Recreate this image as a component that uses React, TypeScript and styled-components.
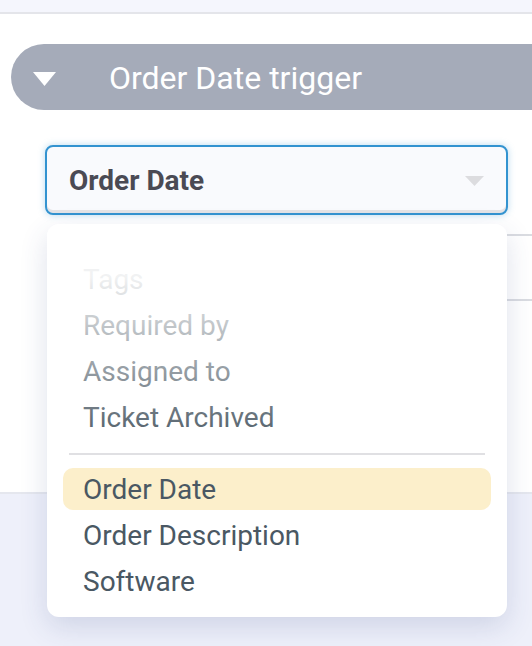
import React from "react";
import styled, { createGlobalStyle } from "styled-components";

const GlobalStyle = createGlobalStyle`
  body {
    margin: 0;
    background: #eef0fa;
    font-family: Roboto, "Liberation Sans", sans-serif;
  }
`;

type Option = { label: string; active?: boolean };

const archived: Option[] = [
  { label: "Tags" },
  { label: "Required by" },
  { label: "Assigned to" },
  { label: "Ticket Archived" },
];

const fields: Option[] = [
  { label: "Order Date", active: true },
  { label: "Order Description" },
  { label: "Software" },
];

const App = () => {
  return (
    <Page>
      <GlobalStyle />
      <TopBand />
      <Panel>
        <Trigger>
          <svg width="23" height="14" viewBox="0 0 23 14">
            <polygon points="0,0 23,0 11.5,14" fill="#ffffff" />
          </svg>
          <TriggerTitle>Order Date trigger</TriggerTitle>
        </Trigger>

        <Field>
          <Select>
            <SelectValue>Order Date</SelectValue>
            <svg width="19" height="10" viewBox="0 0 19 10">
              <polygon points="0,0 19,0 9.5,10" fill="#dcdcdf" />
            </svg>
          </Select>

          <HiddenRow />

          <Menu>
            <Fade />
            <Group>
              {archived.map((o) => (
                <Item key={o.label}>{o.label}</Item>
              ))}
            </Group>
            <Divider />
            <Group>
              {fields.map((o) => (
                <Item key={o.label} $active={o.active}>
                  {o.label}
                </Item>
              ))}
            </Group>
          </Menu>
        </Field>
      </Panel>
    </Page>
  );
};

export default App;

const Page = styled.div`
  width: 532px;
  min-height: 646px;
  overflow: hidden;
`;

const TopBand = styled.div`
  height: 12px;
  background: #f5f6fd;
  border-bottom: 2px solid #e4e5ea;
`;

const Panel = styled.div`
  height: 480px;
  background: #ffffff;
  border-bottom: 2px solid #e5e7ee;
  padding-top: 30px;
  box-sizing: border-box;
`;

const Trigger = styled.div`
  display: flex;
  align-items: center;
  height: 66px;
  margin-left: 11px;
  padding-left: 22px;
  background: #a5abb9;
  border-radius: 33px 0 0 33px;

  & svg {
    flex-shrink: 0;
    margin-top: 3px;
  }
`;

const TriggerTitle = styled.span`
  margin-left: 53px;
  color: #ffffff;
  font-size: 32px;
  line-height: 1;
  margin-top: 2px;
`;

const Field = styled.div`
  position: relative;
  margin: 35px 0 0 45px;
  width: 463px;
`;

const Select = styled.div`
  display: flex;
  align-items: center;
  justify-content: space-between;
  height: 70px;
  box-sizing: border-box;
  padding: 0 22px 0 22px;
  background: #f9fafd;
  border: 2px solid #3393d0;
  border-radius: 8px;
  box-shadow: 0 0 7px rgba(55, 150, 210, 0.35), inset 0 -3px 0 #e3e3e6;

  & svg {
    margin-top: 1px;
  }
`;

const SelectValue = styled.span`
  font-size: 28px;
  font-weight: 700;
  color: #4a4a54;
`;

const HiddenRow = styled.div`
  margin: 19px -40px 0 60px;
  height: 67px;
  box-sizing: border-box;
  border-top: 2px solid #dadce1;
  border-bottom: 2px solid #dadce1;
`;

const Menu = styled.div`
  position: absolute;
  top: 79px;
  left: 2px;
  width: 460px;
  box-sizing: border-box;
  padding: 34px 16px 15px;
  background: #ffffff;
  border-radius: 12px;
  box-shadow: 0 10px 28px rgba(50, 70, 130, 0.16);
  z-index: 2;
`;

const Fade = styled.div`
  position: absolute;
  top: 0;
  left: 0;
  right: 0;
  height: 222px;
  border-radius: 12px 12px 0 0;
  background: linear-gradient(
    to bottom,
    rgba(255, 255, 255, 0.94) 0%,
    rgba(255, 255, 255, 0.92) 24%,
    rgba(255, 255, 255, 0) 100%
  );
  pointer-events: none;
`;

const Group = styled.div`
  display: flex;
  flex-direction: column;
  gap: 4px;
`;

const Item = styled.div<{ $active?: boolean }>`
  height: 42px;
  line-height: 44px;
  padding-left: 20px;
  font-size: 28px;
  color: #4a5863;
  border-radius: 10px;
  background: ${(p) => (p.$active ? "#fcefcb" : "transparent")};
`;

const Divider = styled.div`
  height: 2px;
  margin: 15px 6px 13px;
  background: #e0e0e3;
`;
